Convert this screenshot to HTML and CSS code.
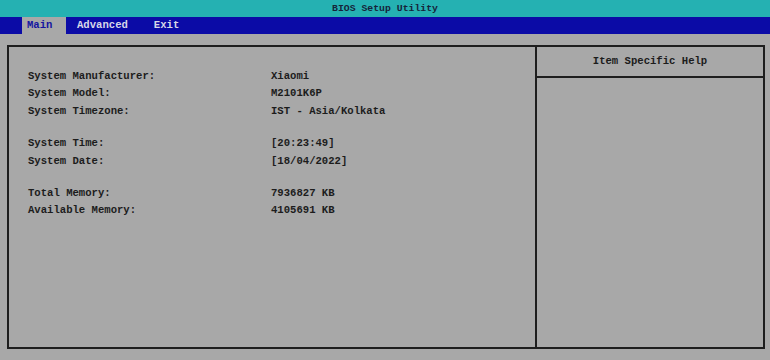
FILE: index.html
```html
<!DOCTYPE html>
<html>
<head>
<meta charset="utf-8">
<link rel="stylesheet" href="styles.css">
</head>
<body>
<div class="titlebar">BIOS Setup Utility</div>
<div class="menubar">
  <div class="tab active">Main</div>
  <div class="tab adv">Advanced</div>
  <div class="tab exit">Exit</div>
</div>
<div class="screen">
  <div class="panel">
    <div class="group">
      <div class="row"><span class="label">System Manufacturer:</span><span class="value">Xiaomi</span></div>
      <div class="row"><span class="label">System Model:</span><span class="value">M2101K6P</span></div>
      <div class="row"><span class="label">System Timezone:</span><span class="value">IST - Asia/Kolkata</span></div>
    </div>
    <div class="group">
      <div class="row"><span class="label">System Time:</span><span class="value">[20:23:49]</span></div>
      <div class="row"><span class="label">System Date:</span><span class="value">[18/04/2022]</span></div>
    </div>
    <div class="group">
      <div class="row"><span class="label">Total Memory:</span><span class="value">7936827 KB</span></div>
      <div class="row"><span class="label">Available Memory:</span><span class="value">4105691 KB</span></div>
    </div>
  </div>
  <div class="help">
    <div class="help-head">Item Specific Help</div>
    <div class="help-body"></div>
  </div>
</div>
</body>
</html>
```
FILE: styles.css
```css
html, body {
  margin: 0;
  padding: 0;
}
body {
  width: 770px;
  height: 360px;
  background: #a8a8a8;
  font-family: "Liberation Mono", "DejaVu Sans Mono", monospace;
  font-weight: bold;
  font-size: 10.6px;
  color: #1c1c1c;
  overflow: hidden;
}
.titlebar {
  height: 17px;
  line-height: 17px;
  background: #25b1b2;
  text-align: center;
  font-size: 9.8px;
  color: #16243a;
}
.menubar {
  height: 17px;
  background: #0b0ba6;
  display: flex;
  padding-left: 22px;
  line-height: 17px;
}
.tab {
  color: #d8d8e8;
}
.tab.active {
  width: 39px;
  padding-left: 5px;
  background: #a8a8a8;
  color: #1515a0;
}
.tab.adv {
  margin-left: 11px;
}
.tab.exit {
  margin-left: 26px;
}
.screen {
  margin: 11px 5px 0 7px;
  height: 300px;
  border: 2px solid #1e1e1e;
  display: flex;
}
.panel {
  width: 528px;
  border-right: 2px solid #1e1e1e;
  padding: 21px 0 0 19px;
  box-sizing: border-box;
}
.group + .group {
  margin-top: 15px;
}
.row {
  display: flex;
  height: 17.4px;
  line-height: 17.4px;
}
.label {
  width: 243px;
}
.help {
  flex: 1;
  display: flex;
  flex-direction: column;
}
.help-head {
  height: 29px;
  line-height: 28px;
  text-align: center;
  border-bottom: 2px solid #1e1e1e;
}
.help-body {
  flex: 1;
}
```
